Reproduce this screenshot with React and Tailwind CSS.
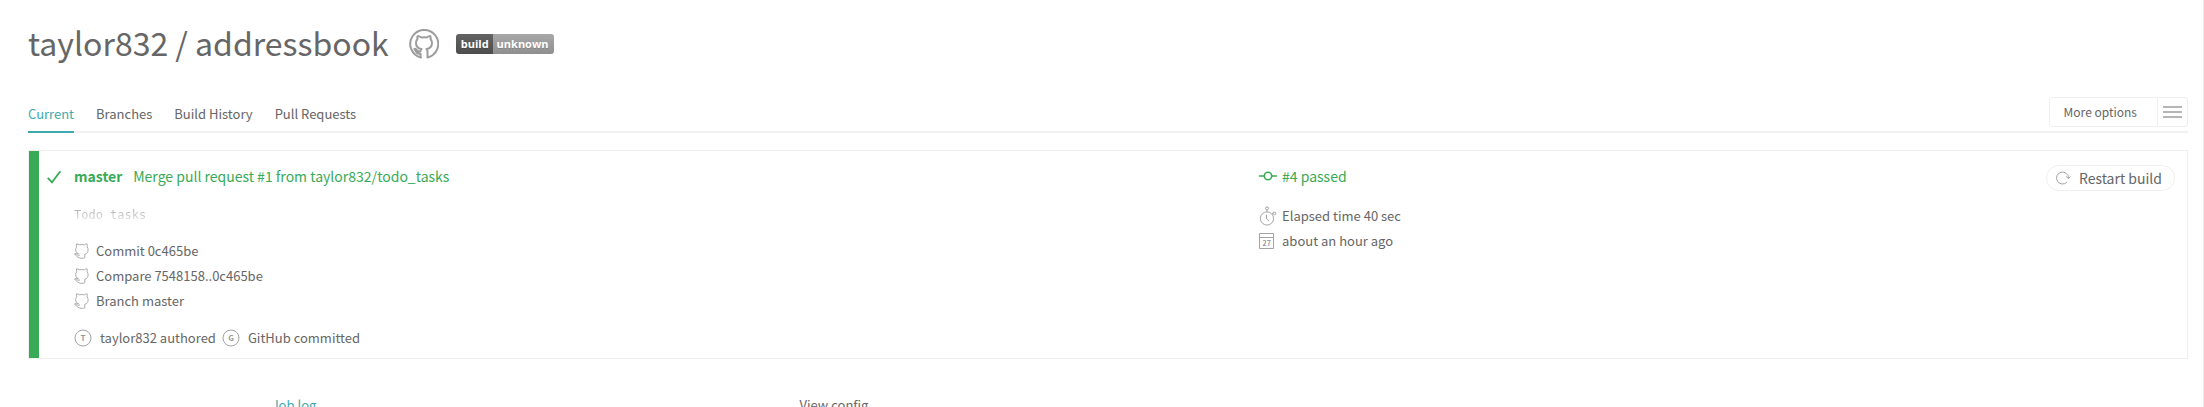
const sans = "font-['Noto_Sans_CJK_SC',sans-serif]";

function RepoIcon() {
  return (
    <svg viewBox="0 0 30 30" className="h-[30px] w-[30px]" fill="none" stroke="#9d9d9d" strokeWidth="2" aria-hidden="true">
      <path d="M12 28.500A14 14 0 1 1 18.500 28.500V22.500c0-1.200-.4-2-1-2.500 3.600-.5 5.500-2.300 5.500-6.200 0-1.700-.6-2.900-1.500-3.800.3-1 .2-2-.2-2.900-1.400 0-2.600.7-3.700 1.400-1.600-.4-3.600-.4-5.200 0C11.300 7.800 10.100 7.100 8.700 7.100c-.4.9-.5 1.900-.2 2.900C7.600 10.900 7 12.100 7 13.800c0 3.900 1.900 5.700 5.500 6.200-.5.400-.9 1.200-1 2.100-2.200.9-3.600-.1-4.300-1.400-.6-.9-1.400-.9-1.800-.7.900 1 1.400 2.200 2.100 3.400.8 1.200 2.500 1.400 4 1v4.100z" strokeLinejoin="round" />
      <path d="M6.500 20.500l3 3" strokeWidth="3" />
    </svg>
  );
}

function CatIcon() {
  return (
    <svg viewBox="0 0 15 16" className="h-4 w-[15px] shrink-0" fill="none" stroke="#a3a3a3" strokeWidth="0.9" strokeLinejoin="round" aria-hidden="true">
      <path d="M3.600 10.300C2.400 9.600 1.700 8.500 1.700 6.600c0-1.200.3-2 1-2.800C2.300 2.700 2.300 1.700 2.600.8c1.100.1 1.900.5 2.700 1 1.600-.3 3.600-.3 5.200 0 .8-.5 1.600-.9 2.500-1 .4.900.4 1.900.1 3 .7.900 1 1.600 1 2.800 0 2.700-1.100 4.200-3.300 4.700v3.500c-1.500.7-3.900.7-5.500.1C3.400 14.300 2.600 13 .7 11.300c1.500-.8 2.700.5 3.600 1.200h1.200" />
      <path d="M.7 11.300c.2-1.400 3-1.700 4.800.3" />
    </svg>
  );
}

function Avatar({ letter }) {
  return (
    <svg viewBox="0 0 18 18" className="h-[18px] w-[18px] shrink-0" aria-hidden="true">
      <circle cx="9" cy="9" r="8" fill="none" stroke="#a3a3a3" />
      <text x="9" y="12" textAnchor="middle" fontSize="8" fontWeight="700" fill="#999" fontFamily="Noto Sans CJK SC, sans-serif">{letter}</text>
    </svg>
  );
}

function ClockIcon() {
  return (
    <svg viewBox="0 0 18 20" className="h-5 w-[18px] shrink-0" fill="none" stroke="#a3a3a3" aria-hidden="true">
      <circle cx="8" cy="12.500" r="6.600" />
      <circle cx="8" cy="2.300" r="1.500" />
      <path d="M8 3.800v2M7.500 8.500v4.300l2.500 2.200M13 7.700l1.500-1.200" />
      <circle cx="15.600" cy="7.400" r="1.300" />
    </svg>
  );
}

function CalendarIcon() {
  return (
    <svg viewBox="0 0 16 16" className="h-4 w-4 shrink-0" fill="none" stroke="#a3a3a3" aria-hidden="true">
      <path d="M.5.5h14v15H.5zM.5 4.500h14" />
      <text x="7.700" y="12.500" textAnchor="middle" fontSize="7" fontWeight="700" fill="#999" stroke="none" fontFamily="Noto Sans CJK SC, sans-serif">27</text>
    </svg>
  );
}

const tabs = ["Current", "Branches", "Build History", "Pull Requests"];
const commitLinks = ["Commit 0c465be", "Compare 7548158..0c465be", "Branch master"];

export default function App() {
  return (
    <main className={`${sans} overflow-hidden border-r border-[#ececec] bg-white pl-7 pr-[15px] text-[13px] text-[#666]`}>
      <header className="flex h-[88px] items-center">
        <h1 className="pb-1 text-[32px] leading-[40px]">
          <a href="#owner">taylor832</a> / <a href="#repo">addressbook</a>
        </h1>
        <a href="#github" aria-label="Repository on GitHub" className="ml-5">
          <RepoIcon />
        </a>
        <button type="button" aria-label="Build status: unknown" className="ml-[17px] flex h-5 overflow-hidden rounded-[3px] font-['Open_Sans',sans-serif] text-[11px] font-bold leading-5 text-white text-shadow-2xs">
          <span className="bg-linear-to-b from-[#636363] to-[#4d4d4d] pl-[5px] pr-1">build</span>
          <span className="bg-linear-to-b from-[#a8a8a8] to-[#8f8f8f] pl-1 pr-[5px]">unknown</span>
        </button>
      </header>

      <div className="flex h-[45px] items-end justify-between border-b-2 border-[#f1f1f1]">
        <nav className="-mb-0.5 flex gap-[22px]">
          {tabs.map((tab, i) => (
            <a key={tab} href="#tab" className={i === 0 ? "h-8 border-b-2 border-[#3eaaaf] leading-[26px] text-[#3eaaaf]" : "h-8 leading-[26px]"}>{tab}</a>
          ))}
        </nav>
        <button type="button" className="mb-1 flex h-[30px] items-center rounded-[3px] border border-[#efefef] text-[12px]">
          <span className="pl-3.5 pr-5">More options</span>
          <span className="flex h-full w-[30px] flex-col items-center justify-center gap-[3px] border-l border-[#efefef]">
            <span className="h-0.5 w-[19px] bg-[#b5b5b5]" />
            <span className="h-0.5 w-[19px] bg-[#b5b5b5]" />
            <span className="h-0.5 w-[19px] bg-[#b5b5b5]" />
          </span>
        </button>
      </div>

      <section className="mt-[17px] flex border border-[#efefef]">
        <div className="flex w-[57%] gap-[13px] border-l-10 border-[#39aa56] pb-2 pl-2 pt-[13px]">
          <svg viewBox="0 0 14 14" className="mt-1.5 h-3.5 w-3.5 shrink-0" fill="none" stroke="#39aa56" strokeWidth="1.800" aria-hidden="true">
            <path d="M.7 7.800l4.300 4.500L13.300 1.300" />
          </svg>
          <div>
            <h2 className="flex gap-[11px] text-[14px] leading-6 text-[#39aa56]">
              <strong>master</strong>
              <span>Merge pull request #1 from taylor832/todo_tasks</span>
            </h2>
            <pre className="mt-[15px] bg-linear-to-b from-[#999] to-white bg-clip-text font-['DejaVu_Sans_Mono',monospace] text-[12px] leading-6 text-transparent">Todo tasks</pre>
            <ul className="mt-[11px]">
              {commitLinks.map((text) => (
                <li key={text}>
                  <a href="#commit" className="flex items-center gap-[7px] leading-[25px]"><CatIcon />{text}</a>
                </li>
              ))}
            </ul>
            <p className="mt-3 flex items-center leading-[25px]">
              <Avatar letter="T" /><span className="ml-2 mr-1.5">taylor832 authored</span>
              <Avatar letter="G" /><span className="ml-2">GitHub committed</span>
            </p>
          </div>
        </div>
        <div className="flex-1 pt-[13px]">
          <p className="flex items-center gap-[5px] text-[14px] leading-6 text-[#39aa56]">
            <svg viewBox="0 0 18 10" className="h-2.5 w-[18px]" fill="none" stroke="#39aa56" strokeWidth="1.600" aria-hidden="true">
              <circle cx="9" cy="5" r="3.700" /><path d="M0 5h5.300M12.700 5H18" />
            </svg>
            <a href="#build">#4 passed</a>
          </p>
          <p className="mt-[15px] flex items-center gap-[5px] leading-[25px]"><ClockIcon />Elapsed time 40 sec</p>
          <p className="flex items-center gap-[7px] leading-[25px]"><CalendarIcon />about an hour ago</p>
        </div>
        <div className="pr-3 pt-3.5">
          <button type="button" className="flex h-[26px] items-center gap-2 rounded-full border border-[#efefef] pl-[9px] pr-3 text-[14px]">
            <svg viewBox="0 0 15 14" className="h-3.5 w-[15px]" fill="none" stroke="#a3a3a3" aria-hidden="true">
              <path d="M11 11A6 6 0 1 1 12.500 7.300M10.200 5.500l2.300 2 2.200-2" />
            </svg>
            Restart build
          </button>
        </div>
      </section>

      <nav className="mt-[34px] flex h-3.5 leading-6">
        <a href="#log" className="w-1/4 pr-2 text-center text-[#3eaaaf]">Job log</a>
        <a href="#config" className="w-1/4 pr-2 text-center">View config</a>
      </nav>
    </main>
  );
}
